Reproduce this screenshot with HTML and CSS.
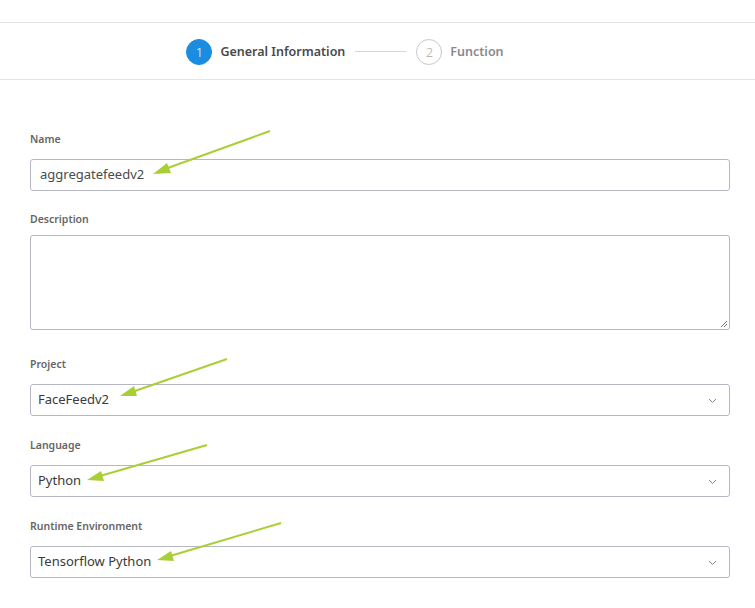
FILE: index.html
```html
<!DOCTYPE html>
<html>
<head>
<meta charset="utf-8">
<link rel="stylesheet" href="styles.css">
</head>
<body>
<div class="page">
  <div class="topbar"></div>
  <div class="stepper">
    <div class="step active"><span class="num">1</span><span class="label">General Information</span></div>
    <div class="connector"></div>
    <div class="step"><span class="num">2</span><span class="label">Function</span></div>
  </div>
  <form class="form">
    <div class="field first">
      <label class="lbl">Name</label>
      <div class="input">aggregatefeedv2</div>
    </div>
    <div class="field">
      <label class="lbl lbl-desc">Description</label>
      <div class="textarea">
        <svg class="grip" width="8" height="8" viewBox="0 0 8 8"><path d="M7 1 L1 7 M7 4 L4 7" stroke="#777" stroke-width="1"/></svg>
      </div>
    </div>
    <div class="field gap">
      <label class="lbl">Project</label>
      <div class="select"><span>FaceFeedv2</span><svg class="chev" width="9" height="6" viewBox="0 0 9 6"><path d="M1 1 L4.5 4.5 L8 1" fill="none" stroke="#888" stroke-width="1"/></svg></div>
    </div>
    <div class="field wide">
      <label class="lbl">Language</label>
      <div class="select"><span>Python</span><svg class="chev" width="9" height="6" viewBox="0 0 9 6"><path d="M1 1 L4.5 4.5 L8 1" fill="none" stroke="#888" stroke-width="1"/></svg></div>
    </div>
    <div class="field wide">
      <label class="lbl">Runtime Environment</label>
      <div class="select"><span>Tensorflow Python</span><svg class="chev" width="9" height="6" viewBox="0 0 9 6"><path d="M1 1 L4.5 4.5 L8 1" fill="none" stroke="#888" stroke-width="1"/></svg></div>
    </div>
  </form>
  <svg class="arrows" width="755" height="608" viewBox="0 0 755 608">
    <g stroke="#a9cf36" stroke-width="2" fill="#a9cf36">
      <line x1="270" y1="131" x2="165" y2="169"/>
      <polygon points="153,174 167,163 171,173" stroke="none"/>
      <line x1="227" y1="359" x2="132" y2="392"/>
      <polygon points="120,396 134,386 137,396" stroke="none"/>
      <line x1="207" y1="445" x2="100" y2="476"/>
      <polygon points="87,480 101,471 104,481" stroke="none"/>
      <line x1="281" y1="523" x2="170" y2="556"/>
      <polygon points="157,560 171,551 174,561" stroke="none"/>
    </g>
  </svg>
</div>
</body>
</html>
```
FILE: styles.css
```css
* { box-sizing: border-box; }
html, body { margin: 0; padding: 0; background: #fff; }
body { font-family: "Noto Sans", "Lato", sans-serif; color: #444; }
.page { position: relative; width: 755px; height: 608px; overflow: hidden; }
.topbar { height: 23px; border-bottom: 1px solid #e4e4e4; }
.stepper {
  height: 57px;
  border-bottom: 1px solid #e4e4e4;
  display: flex;
  align-items: center;
  justify-content: center;
  padding-right: 65px;
  padding-top: 1px;
}
.step { display: flex; align-items: center; }
.num {
  width: 26px; height: 26px; border-radius: 50%;
  border: 1px solid #c9c9c9;
  color: #a8a8a8;
  font-size: 13px;
  display: flex; align-items: center; justify-content: center;
  font-weight: 300;
}
.step.active .num { background: #1a8de1; border-color: #1a8de1; color: #fff; }
.label { margin-left: 8px; font-size: 12.5px; font-weight: 600; color: #8a8a8a; }
.step.active .label { color: #4a4a4a; }
.connector { width: 51px; height: 1px; background: #d6d6d6; margin: 0 10px; }
.form { padding: 0 25px 0 30px; }
.field { display: flex; flex-direction: column; }
.field.first { padding-top: 52px; }
.lbl { font-size: 10.5px; font-weight: 600; color: #666; height: 14px; line-height: 14px; margin-bottom: 13px; }
.lbl-desc { margin-bottom: 9px; }
.field + .field { margin-top: 21px; }
.field.gap { margin-top: 27px; }
.field.wide { margin-top: 22px; }
.input, .select, .textarea {
  border: 1px solid #b5b8c4;
  border-radius: 3px;
  width: 700px;
  background: #fff;
}
.input { height: 32px; padding: 0 9px 2px; font-size: 13px; line-height: 28px; color: #4a4a4a; }
.textarea { height: 95px; position: relative; }
.grip { position: absolute; right: 1px; bottom: 1px; }
.select {
  height: 32px; padding: 0 12px 2px 7px;
  display: flex; align-items: center; justify-content: space-between;
  font-size: 13px; color: #3a3a3a;
}
.chev { margin-top: 3px; }
.arrows { position: absolute; left: 0; top: 0; pointer-events: none; }
```
